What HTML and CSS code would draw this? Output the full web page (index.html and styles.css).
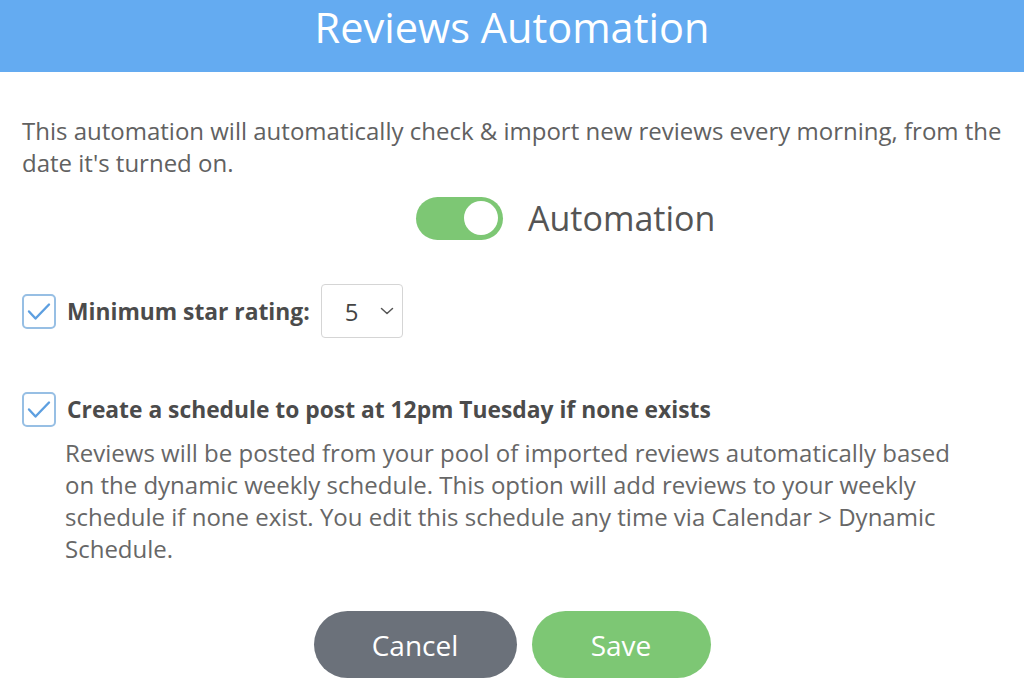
FILE: index.html
```html
<!DOCTYPE html>
<html lang="en">
<head>
<meta charset="utf-8">
<title>Reviews Automation</title>
<link rel="stylesheet" href="styles.css">
</head>
<body>
<div class="modal">
  <header class="modal-header">
    <h1 class="modal-title">Reviews Automation</h1>
  </header>
  <main class="modal-body">
    <p class="intro">This automation will automatically check &amp; import new reviews every morning, from the<br>date it's turned on.</p>
    <div class="toggle-row">
      <span class="toggle"><span class="toggle-knob"></span></span>
      <span class="toggle-label">Automation</span>
    </div>
    <div class="option option-rating">
      <span class="checkbox">
        <svg viewBox="0 0 24 19" width="24" height="19"><path d="M2 9.5L8.5 16.5L22 2.5" fill="none" stroke="#5d9fe0" stroke-width="2.4" stroke-linecap="round" stroke-linejoin="round"/></svg>
      </span>
      <span class="option-label">Minimum star rating:</span>
      <span class="select">
        <span class="select-value">5</span>
        <svg class="chevron" viewBox="0 0 14 8" width="14" height="8"><path d="M1.5 1.5l5.5 5 5.5-5" fill="none" stroke="#555" stroke-width="1.5" stroke-linecap="round" stroke-linejoin="round"/></svg>
      </span>
    </div>
    <div class="option option-schedule">
      <span class="checkbox">
        <svg viewBox="0 0 24 19" width="24" height="19"><path d="M2 9.5L8.5 16.5L22 2.5" fill="none" stroke="#5d9fe0" stroke-width="2.4" stroke-linecap="round" stroke-linejoin="round"/></svg>
      </span>
      <span class="option-label">Create a schedule to post at 12pm Tuesday if none exists</span>
    </div>
    <p class="description">Reviews will be posted from your pool of imported reviews automatically based<br>on the dynamic weekly schedule. This option will add reviews to your weekly<br>schedule if none exist. You edit this schedule any time via Calendar &gt; Dynamic<br>Schedule.</p>
    <div class="actions">
      <button class="btn btn-cancel">Cancel</button>
      <button class="btn btn-save">Save</button>
    </div>
  </main>
</div>
</body>
</html>
```

FILE: styles.css
```css
* { box-sizing: border-box; }
html, body {
  margin: 0;
  padding: 0;
  background: #fff;
}
body {
  font-family: "Open Sans", "Lato", sans-serif;
  color: #5e5e5e;
  width: 1024px;
  height: 693px;
  overflow: hidden;
}
.modal-header {
  background: #64abf1;
  height: 72px;
  display: flex;
  justify-content: center;
  padding-top: 1px;
}
.modal-title {
  margin: 0;
  font-weight: 400;
  font-size: 41.5px;
  line-height: 52px;
  color: #fff;
}
.modal-body {
  padding: 0 22px;
}
.intro {
  margin: 43px 0 0;
  font-size: 24px;
  line-height: 32px;
  color: #616161;
  white-space: nowrap;
}
.toggle-row {
  display: flex;
  align-items: center;
  gap: 25px;
  margin: 16px 0 0 394px;
}
.toggle {
  width: 87px;
  height: 43px;
  border-radius: 22px;
  background: #7dc774;
  display: flex;
  align-items: center;
  justify-content: flex-end;
  padding-right: 5px;
}
.toggle-knob {
  width: 34px;
  height: 34px;
  border-radius: 50%;
  background: #fff;
}
.toggle-label {
  font-size: 34px;
  color: #555;
}
.option {
  display: flex;
  align-items: center;
}
.option-rating {
  margin-top: 43px;
}
.option-schedule {
  margin-top: 54px;
}
.checkbox {
  width: 34px;
  height: 35px;
  border: 2px solid #97bfe4;
  border-radius: 5px;
  display: flex;
  align-items: center;
  justify-content: center;
  margin-right: 11px;
  flex: none;
}
.option-label {
  font-size: 22.8px;
  font-weight: 700;
  color: #4b4b4b;
  white-space: nowrap;
}
.select {
  margin-left: 11px;
  width: 82px;
  height: 54px;
  border: 1px solid #d5d5d5;
  border-radius: 4px;
  display: flex;
  align-items: center;
  padding: 0 8px 0 23px;
  justify-content: space-between;
}
.select-value {
  font-size: 24px;
  color: #444;
}
.description {
  margin: 10px 0 0 43px;
  font-size: 24px;
  line-height: 32px;
  color: #676767;
  white-space: nowrap;
}
.actions {
  display: flex;
  justify-content: center;
  gap: 15px;
  margin-top: 46px;
}
.btn {
  border: none;
  height: 67px;
  border-radius: 34px;
  font-family: inherit;
  font-size: 28px;
  color: #fff;
}
.btn-cancel {
  width: 203px;
  background: #6b717a;
}
.btn-save {
  width: 179px;
  background: #7dc774;
}
```
